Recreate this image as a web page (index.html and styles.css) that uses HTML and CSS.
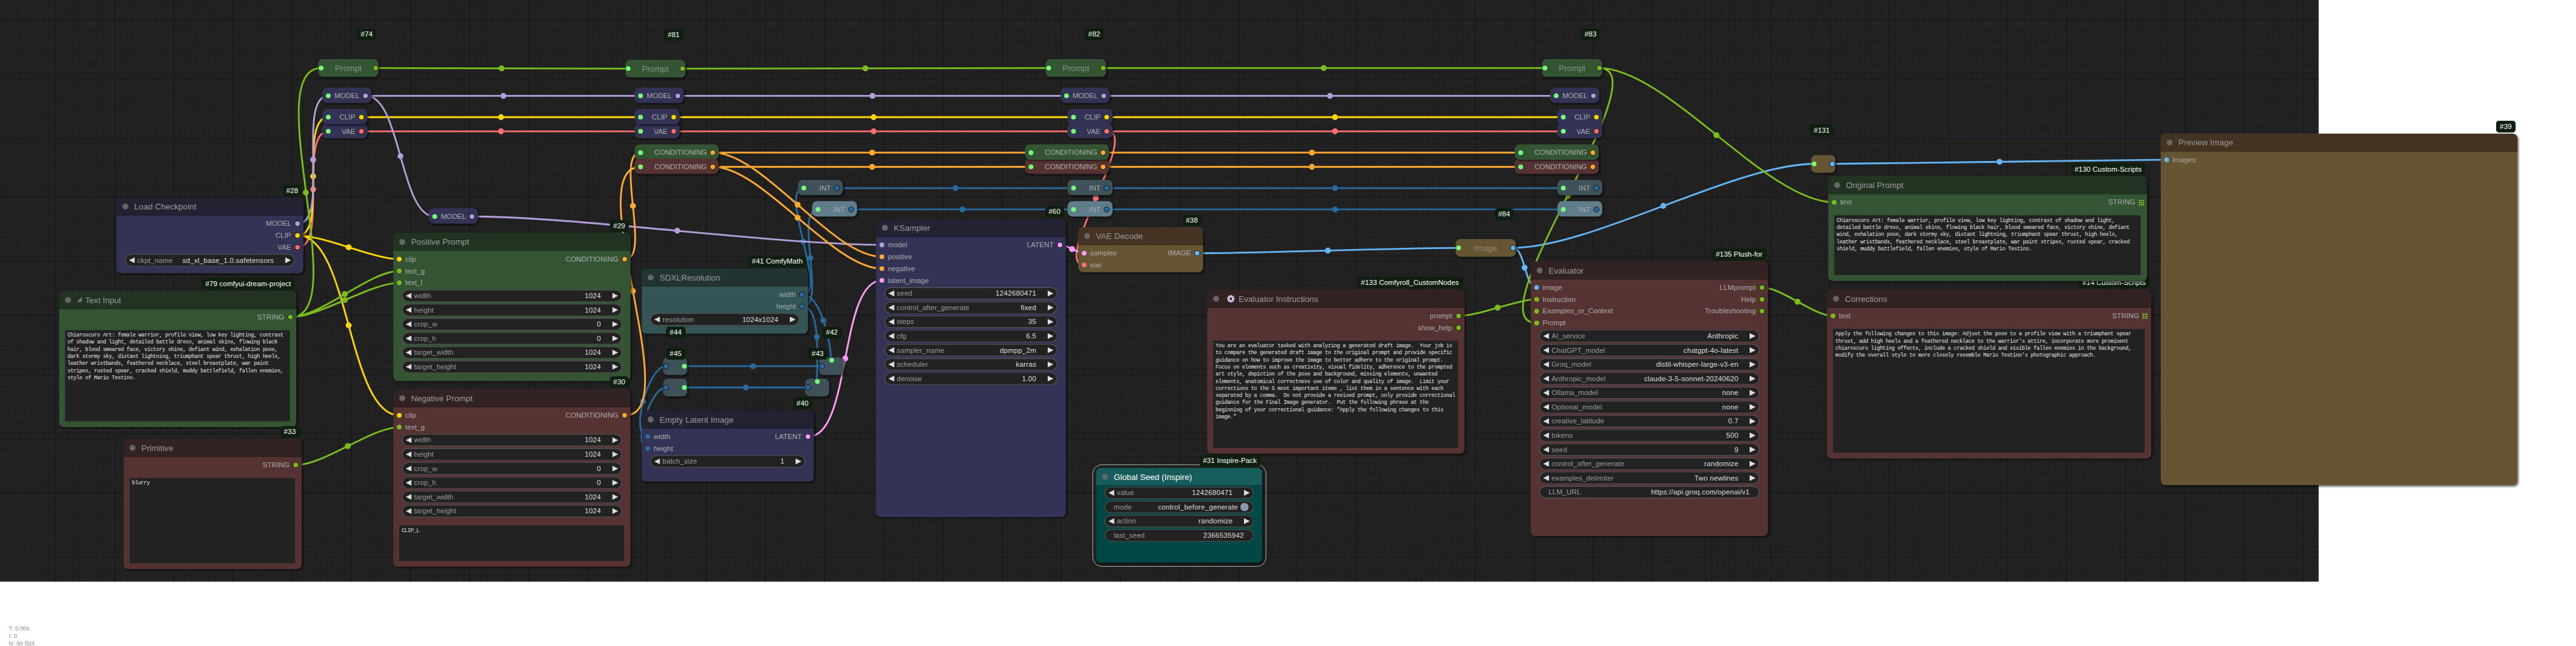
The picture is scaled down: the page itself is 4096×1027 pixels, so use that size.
FILE: index.html
```html
<!DOCTYPE html>
<html lang="en">
<head>
<meta charset="utf-8">
<title>Workflow</title>
<link rel="stylesheet" href="styles.css">
</head>
<body>
<main class="viewport">
<div class="stage">
<div class="backdrop"></div>
<div class="bounds"></div>

<svg class="links" width="4355" height="1091" viewBox="0 0 4355 1091">
  <g class="int">
    <path d="M1416 318H1815M1871 318H2643M1440 354H1815M1871 354H2643M1390 619H1157M1366 655H1157"/>
    <path d="M1357 498C1402 498 1314 318 1359 318M1357 498C1387 498 1405 579 1405 609M1357 518C1399 518 1341 354 1383 354M1357 518C1389 518 1381 613 1381 645"/>
    <path d="M1126 619C1095 619 1064 738 1095 738M1126 655C1099 655 1068 758 1095 758"/>
    <circle cx="1615.5" cy="318" r="5"/><circle cx="2257" cy="318" r="5"/><circle cx="1627" cy="354" r="5"/><circle cx="2257" cy="354" r="5"/><circle cx="1273" cy="619" r="5"/><circle cx="1261" cy="655" r="5"/>
    <circle cx="1358" cy="408" r="5"/><circle cx="1392" cy="542" r="5"/><circle cx="1370" cy="436" r="5"/><circle cx="1381" cy="569.5" r="5"/><circle cx="1087" cy="678.5" r="5"/>
  </g>
  <g class="vae">
    <path d="M504 418C555 418 504 222 555 222M611 222H1083M1139 222H1815M1871 222H2643M1872 222C1929 222 1776 448 1833 448"/>
    <circle cx="529.5" cy="320" r="5"/><circle cx="847" cy="222" r="5"/><circle cx="1477" cy="222" r="5"/><circle cx="2257" cy="222" r="5"/><circle cx="1852.5" cy="335" r="5"/>
  </g>
  <g class="clip">
    <path d="M504 398C556 398 503 198 555 198M504 398C548 398 631 438 675 438M504 398C591 398 588 702 675 702M611 198H1083M1139 198H1815M1871 198H2643"/>
    <circle cx="529.5" cy="298" r="5"/><circle cx="589.5" cy="418" r="5"/><circle cx="589.5" cy="550" r="5"/><circle cx="847" cy="198" r="5"/><circle cx="1477" cy="198" r="5"/><circle cx="2257" cy="198" r="5"/>
  </g>
  <g class="model">
    <path d="M504 378C559 378 500 162 555 162M619 162H1083M1147 162H1803M1867 162H2631M619 162C678 162 676 366 735 366M799 366C972 366 1318 414 1491 414"/>
    <circle cx="529.5" cy="270" r="5"/><circle cx="851" cy="162" r="5"/><circle cx="1475" cy="162" r="5"/><circle cx="2248.5" cy="162" r="5"/><circle cx="677" cy="264" r="5"/><circle cx="1145" cy="390" r="5"/>
  </g>
  <g class="cond">
    <path d="M1057 438C1102 438 1038 258 1083 258M1057 702C1162 702 978 282 1083 282M1206 258H1743M1206 282H1743M1866 258H2571M1866 282H2571"/>
    <path d="M1206 258C1290 258 1407 434 1491 434M1206 282C1289 282 1408 454 1491 454"/>
    <circle cx="1070" cy="348" r="5"/><circle cx="1070" cy="492" r="5"/><circle cx="1474.5" cy="258" r="5"/><circle cx="1474.5" cy="282" r="5"/><circle cx="2218" cy="258" r="5"/><circle cx="2218" cy="282" r="5"/><circle cx="1348.5" cy="346" r="5"/><circle cx="1348.5" cy="368" r="5"/>
  </g>
  <g class="latent">
    <path d="M1367 738C1440 738 1418 474 1491 474M1793 414C1804 414 1822 428 1833 428"/>
    <circle cx="1429" cy="606" r="5"/><circle cx="1812.5" cy="421" r="5"/>
  </g>
  <g class="image">
    <path d="M2025 428C2135 428 2356 419 2466 419M2558 419C2690 419 2935 277 3067 277M2558 419C2578 419 2578 486 2598 486M3098 277C3239 277 3522 270 3663 270"/>
    <circle cx="2245" cy="423.5" r="5"/><circle cx="2812" cy="348" r="5"/><circle cx="2577.5" cy="452.5" r="5"/><circle cx="3380.5" cy="273.5" r="5"/>
  </g>
  <g class="string">
    <path d="M492 536C598 536 437 115 543 115M492 536C542 536 625 458 675 458M492 536C540 536 627 478 675 478M501 786C547 786 629 722 675 722"/>
    <path d="M634 115L1062 116M1154 116L1773 115M1864 115H2612M2703 115C2814 115 2487 546 2598 546M2703 115C2818 115 2987 342 3101 342"/>
    <path d="M2467 534C2500 534 2565 506 2598 506M2980 486C3012 486 3067 534 3099 534"/>
    <circle cx="517" cy="325.5" r="5"/><circle cx="583" cy="497" r="5"/><circle cx="583" cy="507" r="5"/><circle cx="588" cy="754" r="5"/><circle cx="848" cy="115.5" r="5"/><circle cx="1463" cy="115.5" r="5"/><circle cx="2238" cy="115" r="5"/><circle cx="2651" cy="330.5" r="5"/><circle cx="2902" cy="228.5" r="5"/><circle cx="2532" cy="520" r="5"/><circle cx="3039" cy="510" r="5"/>
  </g>
</svg>

<!-- Reroutes, group 74 -->
<div class="reroute green" style="left:538px;top:100px"><i class="dot hot"></i>Prompt<i class="dot out string"></i><b class="badge">#74</b></div>
<div class="tap navy" style="left:545px;top:148px;width:83px"><i class="dot hot"></i>MODEL<i class="dot out model"></i></div>
<div class="tap navy" style="left:545px;top:208px;width:75.5px"><i class="dot hot"></i>VAE<i class="dot out vae"></i></div>
<div class="tap navy" style="left:545px;top:184px;width:75.5px"><i class="dot hot"></i>CLIP<i class="dot out clip"></i></div>
<div class="tap navy" style="left:725px;top:352px;width:83px"><i class="dot hot"></i>MODEL<i class="dot out model"></i></div>

<!-- Reroutes, group 81 -->
<div class="reroute green" style="left:1057px;top:101px"><i class="dot hot"></i>Prompt<i class="dot out string"></i><b class="badge">#81</b></div>
<div class="tap navy" style="left:1073px;top:148px;width:83px"><i class="dot hot"></i>MODEL<i class="dot out model"></i></div>
<div class="tap navy" style="left:1073px;top:208px;width:75.5px"><i class="dot hot"></i>VAE<i class="dot out vae"></i></div>
<div class="tap navy" style="left:1073px;top:184px;width:75.5px"><i class="dot hot"></i>CLIP<i class="dot out clip"></i></div>
<div class="tap green" style="left:1073px;top:244px;width:142px"><i class="dot hot"></i>CONDITIONING<i class="dot out cond"></i></div>
<div class="tap red" style="left:1073px;top:268px;width:142px"><i class="dot hot"></i>CONDITIONING<i class="dot out cond"></i></div>
<div class="tap slate" style="left:1349px;top:304px;width:75.5px"><i class="dot hot"></i>INT<i class="dot out int"></i></div>
<div class="tap steel" style="left:1373px;top:340px;width:75.5px"><i class="dot hot"></i>INT<i class="dot out int"></i></div>

<!-- Reroutes, group 82 -->
<div class="reroute green" style="left:1768px;top:100px"><i class="dot hot"></i>Prompt<i class="dot out string"></i><b class="badge">#82</b></div>
<div class="tap navy" style="left:1793px;top:148px;width:83px"><i class="dot hot"></i>MODEL<i class="dot out model"></i></div>
<div class="tap navy" style="left:1805px;top:184px;width:75.5px"><i class="dot hot"></i>CLIP<i class="dot out clip"></i></div>
<div class="tap navy" style="left:1805px;top:208px;width:75.5px"><i class="dot hot"></i>VAE<i class="dot out vae"></i></div>
<div class="tap red" style="left:1733px;top:268px;width:142px"><i class="dot hot"></i>CONDITIONING<i class="dot out cond"></i></div>
<div class="tap green" style="left:1733px;top:244px;width:142px"><i class="dot hot"></i>CONDITIONING<i class="dot out cond"></i></div>
<div class="tap slate" style="left:1805px;top:304px;width:75.5px"><i class="dot hot"></i>INT<i class="dot out int"></i></div>
<div class="tap steel" style="left:1805px;top:340px;width:75.5px"><i class="dot hot"></i>INT<i class="dot out int"></i></div>

<!-- Reroutes, group 83 -->
<div class="reroute green" style="left:2607px;top:100px"><i class="dot hot"></i>Prompt<i class="dot out string"></i><b class="badge">#83</b></div>
<div class="tap navy" style="left:2621px;top:148px;width:83px"><i class="dot hot"></i>MODEL<i class="dot out model"></i></div>
<div class="tap navy" style="left:2633px;top:184px;width:75.5px"><i class="dot hot"></i>CLIP<i class="dot out clip"></i></div>
<div class="tap navy" style="left:2633px;top:208px;width:75.5px"><i class="dot hot"></i>VAE<i class="dot out vae"></i></div>
<div class="tap red" style="left:2561px;top:268px;width:142px"><i class="dot hot"></i>CONDITIONING<i class="dot out cond"></i></div>
<div class="tap green" style="left:2561px;top:244px;width:142px"><i class="dot hot"></i>CONDITIONING<i class="dot out cond"></i></div>
<div class="tap slate" style="left:2633px;top:304px;width:75.5px"><i class="dot hot"></i>INT<i class="dot out int"></i></div>
<div class="tap steel" style="left:2633px;top:340px;width:75.5px"><i class="dot hot"></i>INT<i class="dot out int"></i></div>
<div class="reroute yellow" style="left:2461px;top:404px"><i class="dot hot"></i>Image<i class="dot out image"></i><b class="badge">#84</b></div>
<div class="reroute small yellow" style="left:3062px;top:262px"><i class="dot hot"></i><i class="dot out image"></i><b class="badge">#131</b></div>

<section class="node navy" style="left:197px;top:334px;width:316px;height:128px">
  <header>Load Checkpoint</header>
  <div class="row"><span class="o">MODEL<i class="dot out model"></i></span></div>
  <div class="row"><span class="o">CLIP<i class="dot out clip"></i></span></div>
  <div class="row"><span class="o">VAE<i class="dot out vae"></i></span></div>
  <div class="widgets"><div class="w"><span>ckpt_name</span><em>sd_xl_base_1.0.safetensors</em></div></div>
  <b class="badge">#28</b>
</section>

<section class="node green" style="left:100px;top:492px;width:401px;height:230px">
  <header><svg class="hand" width="10" height="10" viewBox="0 0 10 10"><path d="M1 9H8.5M1 7.5C3 7.5 3.2 4 5.2 3.2L7.6 .8L8.6 1.6L6.4 4.2H8.6V5H7V6H8.4V7H6.4C5.4 8.2 3.4 7.9 2.6 7.6Z"/></svg>Text Input</header>
  <div class="row"><span class="o">STRING<i class="dot out string"></i></span></div>
  <pre class="text">Chiaroscuro Art: female warrior, profile view, low key lighting, contrast
of shadow and light, detailed battle dress, animal skins, flowing black
hair, blood smeared face, victory shine, defiant wind, exhalation pose,
dark stormy sky, distant lightning, triumphant spear thrust, high heels,
leather wristbands, feathered necklace, steel breastplate, war paint
stripes, rusted spear, cracked shield, muddy battlefield, fallen enemies,
style of Mario Testino.</pre>
  <b class="badge">#79 comfyui-dream-project</b>
</section>

<section class="node red" style="left:209px;top:742px;width:301px;height:220px">
  <header>Primitive</header>
  <div class="row"><span class="o">STRING<i class="dot out string"></i></span></div>
  <pre class="text">blurry</pre>
  <b class="badge wide">#33</b>
</section>

<section class="node green" style="left:665px;top:394px;width:401px;height:250px">
  <header>Positive Prompt</header>
  <div class="row"><span><i class="dot clip"></i>clip</span><span class="o">CONDITIONING<i class="dot out cond"></i></span></div>
  <div class="row"><span><i class="dot string"></i>text_g</span></div>
  <div class="row"><span><i class="dot string"></i>text_l</span></div>
  <div class="widgets">
    <div class="w"><span>width</span><em>1024</em></div>
    <div class="w"><span>height</span><em>1024</em></div>
    <div class="w"><span>crop_w</span><em>0</em></div>
    <div class="w"><span>crop_h</span><em>0</em></div>
    <div class="w"><span>target_width</span><em>1024</em></div>
    <div class="w"><span>target_height</span><em>1024</em></div>
  </div>
  <b class="badge">#29</b>
</section>

<section class="node red" style="left:665px;top:658px;width:401px;height:300px">
  <header>Negative Prompt</header>
  <div class="row"><span><i class="dot clip"></i>clip</span><span class="o">CONDITIONING<i class="dot out cond"></i></span></div>
  <div class="row"><span><i class="dot string"></i>text_g</span></div>
  <div class="widgets">
    <div class="w"><span>width</span><em>1024</em></div>
    <div class="w"><span>height</span><em>1024</em></div>
    <div class="w"><span>crop_w</span><em>0</em></div>
    <div class="w"><span>crop_h</span><em>0</em></div>
    <div class="w"><span>target_width</span><em>1024</em></div>
    <div class="w"><span>target_height</span><em>1024</em></div>
  </div>
  <pre class="text after">CLIP_L</pre>
  <b class="badge">#30</b>
</section>

<section class="node cyan" style="left:1085px;top:454px;width:281px;height:110px">
  <header>SDXLResolution</header>
  <div class="row"><span class="o">width<i class="dot out int"></i></span></div>
  <div class="row"><span class="o">height<i class="dot out int"></i></span></div>
  <div class="widgets"><div class="w"><span>resolution</span><em>1024x1024</em></div></div>
  <b class="badge">#41 ComfyMath</b>
</section>

<div class="reroute small slate" style="left:1121px;top:604px"><i class="dot out int"></i><i class="dot hot"></i><b class="badge">#44</b></div>
<div class="reroute small slate" style="left:1121px;top:640px"><i class="dot out int"></i><i class="dot hot"></i><b class="badge">#45</b></div>
<div class="reroute small slate" style="left:1385px;top:604px"><i class="dot out int"></i><i class="dot hot upper"></i><b class="badge">#42</b></div>
<div class="reroute small slate" style="left:1361px;top:640px"><i class="dot out int"></i><i class="dot hot upper"></i><b class="badge">#43</b></div>

<section class="node navy" style="left:1085px;top:694px;width:291px;height:120px">
  <header>Empty Latent Image</header>
  <div class="row"><span><i class="dot int"></i>width</span><span class="o">LATENT<i class="dot out latent"></i></span></div>
  <div class="row"><span><i class="dot int"></i>height</span></div>
  <div class="widgets"><div class="w"><span>batch_size</span><em>1</em></div></div>
  <b class="badge">#40</b>
</section>

<section class="node navy" style="left:1481px;top:370px;width:321px;height:504px">
  <header>KSampler</header>
  <div class="row"><span><i class="dot model"></i>model</span><span class="o">LATENT<i class="dot out latent"></i></span></div>
  <div class="row"><span><i class="dot cond"></i>positive</span></div>
  <div class="row"><span><i class="dot cond"></i>negative</span></div>
  <div class="row"><span><i class="dot latent"></i>latent_image</span></div>
  <div class="widgets">
    <div class="w"><span>seed</span><em>1242680471</em></div>
    <div class="w"><span>control_after_generate</span><em>fixed</em></div>
    <div class="w"><span>steps</span><em>35</em></div>
    <div class="w"><span>cfg</span><em>6.5</em></div>
    <div class="w"><span>sampler_name</span><em>dpmpp_2m</em></div>
    <div class="w"><span>scheduler</span><em>karras</em></div>
    <div class="w"><span>denoise</span><em>1.00</em></div>
  </div>
  <b class="badge">#60</b>
</section>

<section class="node yellow" style="left:1823px;top:384px;width:211px;height:76px">
  <header>VAE Decode</header>
  <div class="row"><span><i class="dot latent"></i>samples</span><span class="o">IMAGE<i class="dot out image"></i></span></div>
  <div class="row"><span><i class="dot vae"></i>vae</span></div>
  <b class="badge">#38</b>
</section>

<section class="node red" style="left:2041px;top:490px;width:434.5px;height:277px">
  <header><svg class="gear" width="14" height="14" viewBox="-7 -7 14 14"><path d="M0-6.7V-4M0 4V6.7M-6.7 0H-4M4 0H6.7M-4.7-4.7L-2.8-2.8M2.8 2.8L4.7 4.7M4.7-4.7L2.8-2.8M-2.8 2.8L-4.7 4.7"/><circle r="3.7"/></svg>Evaluator Instructions</header>
  <div class="row"><span class="o">prompt<i class="dot out string"></i></span></div>
  <div class="row"><span class="o">show_help<i class="dot out string"></i></span></div>
  <pre class="text">You are an evaluator tasked with analyzing a generated draft image.  Your job is
to compare the generated draft image to the original prompt and provide specific
guidance on how to improve the image to better adhere to the original prompt.
Focus on elements such as creativity, visual fidelity, adherence to the prompted
art style, depiction of the pose and background, missing elements, unwanted
elements, anatomical correctness use of color and quality of image.  Limit your
corrections to the 5 most important items , list them in a sentence with each
separated by a comma.  Do not provide a revised prompt, only provide correctional
guidance for the Final Image generator.  Put the following phrase at the
beginning of your correctional guidance: "Apply the following changes to this
image."</pre>
  <b class="badge">#133 Comfyroll_CustomNodes</b>
</section>

<section class="node teal selected" style="left:1853px;top:791px;width:281px;height:160px">
  <header>Global Seed (Inspire)</header>
  <div class="widgets top">
    <div class="w"><span>value</span><em>1242680471</em></div>
    <div class="w toggle"><span>mode</span><em>control_before_generate</em><i class="knob"></i></div>
    <div class="w"><span>action</span><em>randomize</em></div>
    <div class="w plain"><span>last_seed</span><em>2366535942</em></div>
  </div>
  <b class="badge">#31 Inspire-Pack</b>
</section>

<section class="node red" style="left:2588px;top:442px;width:401px;height:464px">
  <header>Evaluator</header>
  <div class="row"><span><i class="dot image"></i>image</span><span class="o">LLMprompt<i class="dot out string"></i></span></div>
  <div class="row"><span><i class="dot string"></i>Instruction</span><span class="o">Help<i class="dot out string"></i></span></div>
  <div class="row"><span><i class="dot string"></i>Examples_or_Context</span><span class="o">Troubleshooting<i class="dot out string"></i></span></div>
  <div class="row"><span><i class="dot string"></i>Prompt</span></div>
  <div class="widgets">
    <div class="w"><span>AI_service</span><em>Anthropic</em></div>
    <div class="w"><span>ChatGPT_model</span><em>chatgpt-4o-latest</em></div>
    <div class="w"><span>Groq_model</span><em>distil-whisper-large-v3-en</em></div>
    <div class="w"><span>Anthropic_model</span><em>claude-3-5-sonnet-20240620</em></div>
    <div class="w"><span>Ollama_model</span><em>none</em></div>
    <div class="w"><span>Optional_model</span><em>none</em></div>
    <div class="w"><span>creative_latitude</span><em>0.7</em></div>
    <div class="w"><span>tokens</span><em>500</em></div>
    <div class="w"><span>seed</span><em>9</em></div>
    <div class="w"><span>control_after_generate</span><em>randomize</em></div>
    <div class="w"><span>examples_delimiter</span><em>Two newlines</em></div>
    <div class="w plain"><span>LLM_URL</span><em>https://api.groq.com/openai/v1</em></div>
  </div>
  <b class="badge">#135 Plush-for</b>
</section>

<section class="node red" style="left:3089px;top:490px;width:547.5px;height:285px">
  <header>Corrections</header>
  <div class="row"><span><i class="dot string"></i>text</span><span class="o">STRING<i class="grid"></i></span></div>
  <pre class="text">Apply the following changes to this image: Adjust the pose to a profile view with a triumphant spear
thrust, add high heels and a feathered necklace to the warrior's attire, incorporate more prominent
chiaroscuro lighting effects, include a cracked shield and visible fallen enemies in the background,
modify the overall style to more closely resemble Mario Testino's photographic approach.</pre>
  <b class="badge">#14 Custom-Scripts</b>
</section>

<section class="node green" style="left:3091px;top:298px;width:539px;height:177px">
  <header>Original Prompt</header>
  <div class="row"><span><i class="dot string"></i>text</span><span class="o">STRING<i class="grid"></i></span></div>
  <pre class="text">Chiaroscuro Art: female warrior, profile view, low key lighting, contrast of shadow and light,
detailed battle dress, animal skins, flowing black hair, blood smeared face, victory shine, defiant
wind, exhalation pose, dark stormy sky, distant lightning, triumphant spear thrust, high heels,
leather wristbands, feathered necklace, steel breastplate, war paint stripes, rusted spear, cracked
shield, muddy battlefield, fallen enemies, style of Mario Testino.</pre>
  <b class="badge">#130 Custom-Scripts</b>
</section>

<section class="node yellow" style="left:3653px;top:226px;width:602.5px;height:594px">
  <header>Preview Image</header>
  <div class="row"><span><i class="dot image"></i>images</span></div>
  <b class="badge">#39</b>
</section>

<div class="stats">T: 0.00s<br>I: 0<br>N: 50 [50]</div>
</div>
</main>
</body>
</html>
```
FILE: styles.css
```css
body {
  margin: 0;
  background: #fff;
}

.viewport {
  width: 4096px;
  height: 1027px;
  overflow: clip;
  contain: strict;
}

.stage {
  position: relative;
  width: 4355px;
  height: 1091px;
  overflow: clip;
  transform: scale(.9405);
  transform-origin: 0 0;
  font: 12px "Liberation Sans", Arial, sans-serif;
  color: #aaa;
}

/* Canvas with its 10px / 100px grid */
.backdrop {
  width: 3919.5px;
  height: 982.5px;
  background-color: #222;
  background-image:
    linear-gradient(#1a1a1a 2px, transparent 2px),
    linear-gradient(90deg, #1a1a1a 2px, transparent 2px),
    linear-gradient(#1d1d1d 1px, transparent 1px),
    linear-gradient(90deg, #1d1d1d 1px, transparent 1px);
  background-size: 100px 100px, 100px 100px, 10px 10px, 10px 10px;
  background-position: 93px 32px, 93px 32px, 3px 2px, 3px 2px;
}

.bounds {
  position: absolute;
  left: 3292px;
  top: 230.5px;
  width: 627px;
  height: 751px;
  box-sizing: border-box;
  border: 1px solid #223355;
  border-width: 1px 0 0 1px;
}

.links {
  position: absolute;
  left: 0;
  top: 0;
}
.links path { fill: none; stroke: currentColor; stroke-width: 3; }
.links circle { fill: currentColor; }

.string { color: #7bbd1c; }
.model { color: #b39ddb; }
.clip { color: #ffd500; }
.vae { color: #ff6e6e; }
.cond { color: #ffa931; }
.latent { color: #ff9cf9; }
.image { color: #64b5f6; }
.int { color: #29699c; }
.hot { color: #77ff77; }

/* Node palette */
.navy { --head: #222233; --body: #333355; }
.green { --head: #223322; --body: #335533; }
.red { --head: #332222; --body: #553333; }
.yellow { --head: #443322; --body: #665533; }
.cyan { --head: #223333; --body: #335555; }
.teal { --head: #165c5b; --body: #004845; }
.slate { --body: #3f5159; }
.steel { --body: #607d8b; }

.node, .tap, .reroute {
  position: absolute;
  box-sizing: border-box;
  border-radius: 8px;
  background: var(--body);
  box-shadow: 2px 2px 3px rgba(0, 0, 0, .5);
  white-space: nowrap;
}

.node {
  display: flex;
  flex-direction: column;
}

.node header {
  display: flex;
  align-items: center;
  box-sizing: border-box;
  height: 30px;
  flex: none;
  margin-bottom: 4px;
  padding-left: 10px;
  border-radius: 8px 8px 0 0;
  background: linear-gradient(transparent 29px, rgba(0, 0, 0, .2) 29px) var(--head);
  box-shadow: 0 1px rgba(0, 0, 0, .2);
  color: #999;
  font-size: 14px;
  line-height: 30px;
}
.node header::before {
  content: "";
  width: 10px;
  height: 10px;
  margin-right: 10px;
  border-radius: 50%;
  background: #666;
}

.hand { margin-right: 4px; fill: #777; stroke: #999; stroke-width: .5; }
.gear { margin: 0 6px 0 3px; fill: none; stroke: #d3c3e3; stroke-width: 2.4; }
.gear circle { stroke-width: 3; }

.row {
  display: flex;
  justify-content: space-between;
  flex: none;
  height: 20px;
  padding: 0 5.5px 0 6px;
  line-height: 21px;
}
.row span { display: flex; gap: 6px; align-items: center; height: 20px; letter-spacing: .05px; }
.row .o { margin-left: auto; gap: 5.5px; }

.dot {
  width: 8px;
  height: 8px;
  flex: none;
  border-radius: 50%;
  background: currentColor;
}
.dot.out {
  box-sizing: border-box;
  width: 10px;
  height: 10px;
  margin-right: -.5px;
  border: 1px solid #111;
}

/* 3x3 list-output marker */
.grid {
  width: 9px;
  height: 9px;
  background:
    linear-gradient(90deg, transparent 2.2px, var(--body) 2.2px 3.3px, transparent 3.3px 5.6px, var(--body) 5.6px 6.7px, transparent 6.7px),
    linear-gradient(#7bbd1c 2.2px, transparent 2.2px 3.3px, #7bbd1c 3.3px 5.6px, transparent 5.6px 6.7px, #7bbd1c 6.7px);
}

.widgets {
  display: flex;
  flex-direction: column;
  gap: 4px;
  flex: none;
  margin: 2px 15px 0;
}
.widgets.top { margin-top: -2px; }

.w {
  position: relative;
  display: flex;
  justify-content: space-between;
  box-sizing: border-box;
  height: 20px;
  padding: 0 35px 0 20px;
  border-radius: 10px;
  background: #222;
  box-shadow: inset 0 0 0 .6px #666, 0 0 0 .4px #666;
  color: #999;
  line-height: 20px;
  letter-spacing: .1px;
}
.w em { font-style: normal; color: #ddd; letter-spacing: .2px; }
.w::before, .w::after {
  content: "";
  position: absolute;
  top: 5px;
  width: 10px;
  height: 10px;
  background: #ddd;
}
.w::before { left: 6px; clip-path: polygon(100% 0, 0 50%, 100% 100%); }
.w::after { right: 6px; clip-path: polygon(0 0, 100% 50%, 0 100%); }
.w.plain, .w.toggle { padding: 0 16px 0 15px; }
.w.plain::before, .w.plain::after, .w.toggle::before, .w.toggle::after { content: none; }
.w.toggle { padding-right: 8px; align-items: center; }
.w.toggle em { margin-left: auto; margin-right: 3.5px; }
.knob { width: 14.4px; height: 14.4px; border-radius: 50%; background: #8899aa; }

.text {
  flex: 1;
  margin: 12px 11px 10px 10px;
  padding: 2.5px 0 0 4px;
  background: #222;
  color: #e4e4e4;
  font: 9px/12px "Liberation Mono", monospace;
  letter-spacing: -.4px;
  overflow: hidden;
}
.text.after { margin-top: 14px; }

.badge {
  position: absolute;
  top: -22px;
  right: 3px;
  height: 20px;
  padding: 0 6px;
  border-radius: 5px;
  background: #0f1f0f;
  color: #fff;
  font-weight: normal;
  font-size: 12px;
  line-height: 20px;
  letter-spacing: .08px;
}
.badge.wide { right: 1px; padding-right: 9px; }

/* Selection outline */
.selected::before {
  content: "";
  position: absolute;
  inset: -6.5px;
  border: 1px solid #b4b4b4;
  border-radius: 16px;
}
.selected header { color: #fff; }

.tap {
  display: flex;
  align-items: center;
  height: 26px;
  padding: 2px 5px 0 6px;
  line-height: 24px;
}
.tap .hot { margin-right: auto; }
.tap .out { margin: 0 0 0 5px; }

.reroute {
  display: flex;
  align-items: center;
  justify-content: space-between;
  width: 101.6px;
  height: 30px;
  padding: 0 1px;
  color: #848f84;
  font-size: 14px;
  line-height: 28px;
}
.reroute.yellow { color: #8d8675; }
.reroute.small { width: 41px; }
.reroute .dot.out { margin: 0 -1px; }
.reroute .hot.upper { position: absolute; left: 16.5px; top: 1px; }
.reroute .badge { top: -52px; right: 3.5px; }

.stats {
  position: absolute;
  left: 15px;
  top: 1055px;
  height: 36px;
  overflow: hidden;
  color: #888;
  font-size: 10px;
  line-height: 13px;
}
```
